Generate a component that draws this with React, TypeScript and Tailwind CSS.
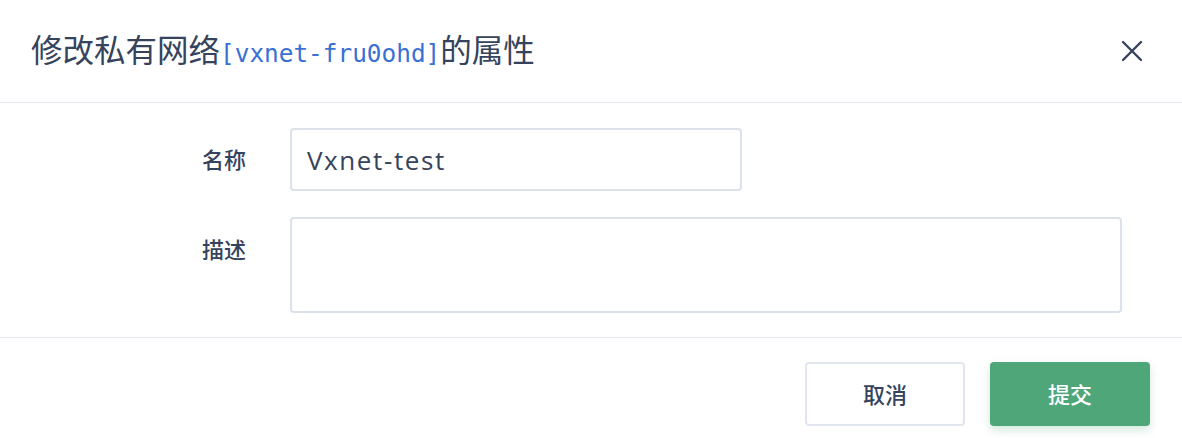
import { useState } from 'react'

const cjk = "font-['Noto_Sans','Noto_Sans_CJK_SC',sans-serif]"

const EditVxnet = () => {
  const [name, setName] = useState("Vxnet-test");
  const [desc, setDesc] = useState("");

  return (
    <div className={`w-[1182px] h-[438px] bg-white text-[#36435c] flex flex-col ${cjk}`}>
      {/* header */}
      <div className="h-[103px] shrink-0 flex items-center justify-between pl-[31px] pr-[38px] border-b border-[#e3e8ee]">
        <h1 className="text-[31.5px] leading-none font-normal pb-[2px] flex items-baseline">
          修改私有网络
          <span className="font-['DejaVu_Sans_Mono','Liberation_Mono',monospace] text-[24.4px] text-[#3a70d4]">[vxnet-fru0ohd]</span>
          的属性
        </h1>
        <button className="w-[24px] h-[24px] flex items-center justify-center text-[#36435c]">
          <svg width="22" height="22" viewBox="0 0 22 22" fill="none" stroke="currentColor" strokeWidth="2.4" strokeLinecap="round">
            <path d="M2 2L20 20M20 2L2 20" />
          </svg>
        </button>
      </div>

      {/* body */}
      <div className="flex-1 flex flex-col gap-[26px] pt-[25px] pl-[202px] pr-[60px] border-b border-[#e3e8ee]">
        <div className="flex items-center">
          <label className="w-[88px] text-[22px] font-medium">名称</label>
          <input
            value={name}
            onChange={({ target: { value } }) => setName(value)}
            className="w-[452px] h-[63px] px-[15px] rounded-[4px] border-2 border-[#dbe2ea] font-['Open_Sans',sans-serif] text-[26px] tracking-[1.6px] text-[#36435c] outline-none"
          />
        </div>
        <div className="flex items-start">
          <label className="w-[88px] text-[22px] font-medium pt-[16px]">描述</label>
          <textarea
            value={desc}
            onChange={({ target: { value } }) => setDesc(value)}
            className="w-[832px] h-[96px] px-[15px] py-[10px] rounded-[4px] border-2 border-[#dbe2ea] text-[20px] resize-none outline-none"
          />
        </div>
      </div>

      {/* footer */}
      <div className="h-[100px] shrink-0 flex items-start justify-end gap-[25px] pt-[24px] pr-[32px]">
        <button className="w-[160px] h-[64px] rounded-[4px] border-2 border-[#e1e6ee] bg-white text-[22px] font-medium text-[#36435c]">
          取消
        </button>
        <button className="w-[160px] h-[64px] rounded-[4px] bg-[#4ea679] text-[22px] font-medium text-white shadow-[0_4px_10px_rgba(78,166,121,0.25)]">
          提交
        </button>
      </div>
    </div>
  )
}

export default EditVxnet
